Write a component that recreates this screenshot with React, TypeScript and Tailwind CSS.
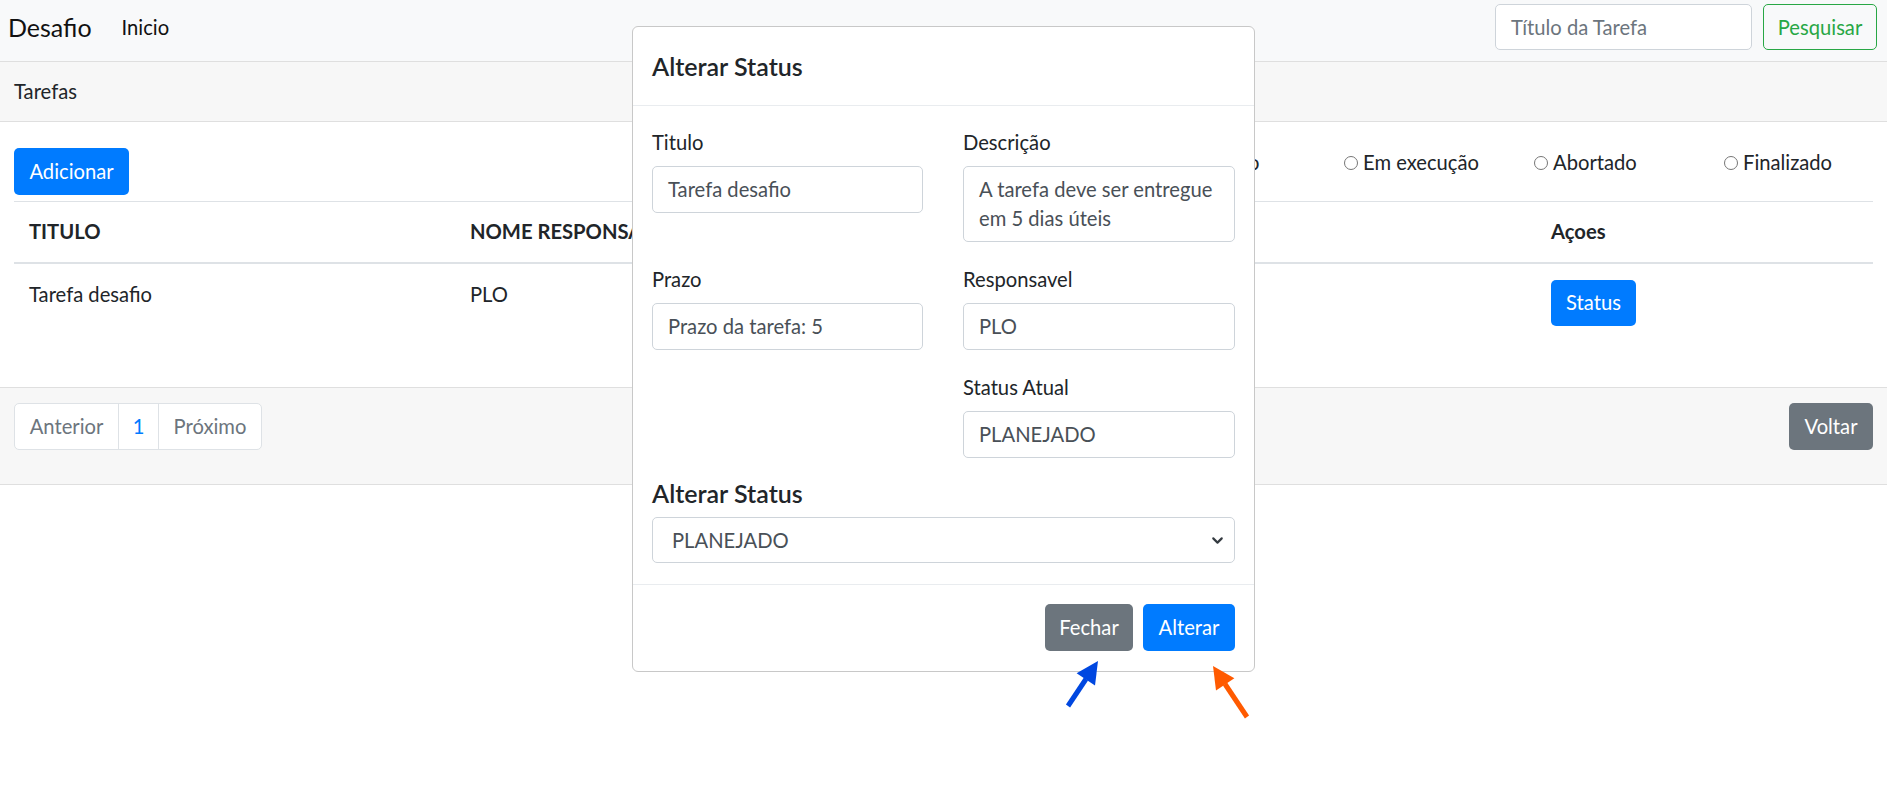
import { ChevronDown } from 'lucide-react'

const font = { fontFamily: 'Lato, "Liberation Sans", sans-serif' }

function Radio({ label, last }: { label: string; last?: boolean }) {
  return (
    <label className={`flex items-center ${last ? '' : 'w-[190px]'}`}>
      <span className="mr-[5px] inline-block h-[14px] w-[14px] rounded-full border border-[#767676] bg-white" />
      <span>{label}</span>
    </label>
  )
}

function Field({ label, value }: { label: string; value: string }) {
  return (
    <div>
      <div className="mb-[9px] leading-[29px]">{label}</div>
      <div className="flex h-[47px] items-center rounded-[5px] border border-[#ced4da] px-[15px] text-[#495057]">
        {value}
      </div>
    </div>
  )
}

function Modal() {
  return (
    <div className="absolute left-[632px] top-[26px] flex h-[646px] w-[623px] flex-col rounded-[6px] border border-[#c8c8c8] bg-white">
      <div className="flex h-[79px] items-center border-b border-[#e9ecef] px-[19px]">
        <h5 className="text-[25px] font-semibold leading-[29px] text-[#212529]">Alterar Status</h5>
      </div>
      <div className="px-[19px] pt-[22px]">
        <div className="grid grid-cols-[271px_272px] gap-x-[40px] gap-y-[23px]">
          <Field label="Titulo" value="Tarefa desafio" />
          <div>
            <div className="mb-[9px] leading-[29px]">Descrição</div>
            <div className="h-[76px] rounded-[5px] border border-[#ced4da] px-[15px] py-[8px] leading-[29px] text-[#495057]">
              A tarefa deve ser entregue
              <br />
              em 5 dias úteis
            </div>
          </div>
          <Field label="Prazo" value="Prazo da tarefa: 5" />
          <Field label="Responsavel" value="PLO" />
          <div />
          <Field label="Status Atual" value="PLANEJADO" />
        </div>
        <div className="mt-[21px]">
          <h5 className="mb-[9px] text-[25px] font-semibold leading-[29px]">Alterar Status</h5>
          <div className="flex h-[46px] items-center justify-between rounded-[5px] border border-[#ced4da] pl-[19px] pr-[8px] text-[#495057]">
            <span>PLANEJADO</span>
            <ChevronDown size={17} strokeWidth={3} className="text-[#343a40]" />
          </div>
        </div>
      </div>
      <div className="mt-[21px] flex flex-1 items-start justify-end gap-[10px] border-t border-[#e9ecef] px-[19px] pt-[19px]">
        <button className="h-[47px] w-[88px] rounded-[5px] bg-[#6c757d] text-white">Fechar</button>
        <button className="h-[47px] w-[92px] rounded-[5px] bg-[#007bff] text-white">Alterar</button>
      </div>
    </div>
  )
}

export default function App() {
  return (
    <div className="relative h-[805px] overflow-hidden bg-white text-[20.2px] leading-[29px] text-[#212529]" style={font}>
      <nav className="flex h-[61px] items-start bg-[#f8f9fa] pl-[8px] pr-[10px] pt-[4px]">
        <div className="flex h-[46px] items-center">
          <span className="text-[25px] text-[#111]">Desafio</span>
          <span className="ml-[30px] text-[#111]">Inicio</span>
        </div>
        <div className="ml-auto flex items-center gap-[11px]">
          <div className="flex h-[46px] w-[257px] items-center rounded-[5px] border border-[#ced4da] bg-white px-[15px] text-[#6c757d]">
            Título da Tarefa
          </div>
          <button className="h-[46px] w-[114px] rounded-[5px] border border-[#28a745] text-[#28a745]">Pesquisar</button>
        </div>
      </nav>

      <div className="border-t border-[#dfdfdf]">
        <div className="flex h-[60px] items-center border-b border-[#dfdfdf] bg-[#f7f7f7] px-[14px]">Tarefas</div>

        <div className="px-[14px] pt-[26px]">
          <div className="flex items-start">
            <button className="h-[47px] w-[115px] rounded-[5px] bg-[#007bff] text-white">Adicionar</button>
            <div className="ml-[1025px] flex">
              <Radio label="Planejado" />
              <Radio label="Em execução" />
              <Radio label="Abortado" />
              <Radio label="Finalizado" last />
            </div>
          </div>

          <table className="mt-[6px] w-full border-collapse text-left">
            <thead>
              <tr className="h-[61px] border-t border-b-2 border-[#dee2e6]">
                <th className="w-[442px] px-[15px] font-bold">TITULO</th>
                <th className="px-[14px] font-bold">NOME RESPONSAVEL</th>
                <th className="w-[336px] px-[14px] font-bold">Açoes</th>
              </tr>
            </thead>
            <tbody>
              <tr>
                <td className="px-[15px] pb-[14px] pt-[16px] align-top">Tarefa desafio</td>
                <td className="px-[14px] pb-[14px] pt-[16px] align-top">PLO</td>
                <td className="px-[14px] pb-[14px] pt-[16px] align-top">
                  <button className="h-[46px] w-[85px] rounded-[5px] bg-[#007bff] text-white">Status</button>
                </td>
              </tr>
            </tbody>
          </table>
          <div className="h-[47px]" />
        </div>

        <div className="flex items-start justify-between border-y border-[#dfdfdf] bg-[#f7f7f7] px-[14px] pb-[34px] pt-[15px]">
          <div className="flex h-[47px] overflow-hidden rounded-[5px] border border-[#dee2e6] bg-white">
            <span className="flex w-[103px] items-center justify-center text-[#6c757d]">Anterior</span>
            <span className="flex w-[41px] items-center justify-center border-x border-[#dee2e6] text-[#007bff]">1</span>
            <span className="flex w-[102px] items-center justify-center text-[#6c757d]">Próximo</span>
          </div>
          <button className="h-[47px] w-[84px] rounded-[5px] bg-[#6c757d] text-white">Voltar</button>
        </div>
      </div>

      <Modal />

      <svg className="absolute left-[1040px] top-[640px]" width="230" height="100" viewBox="0 0 230 100">
        <line x1="28" y1="66" x2="46" y2="39" stroke="#0047e0" strokeWidth="5" />
        <polygon points="58,21 55,45.4 36.6,33.2" fill="#0047e0" />
        <line x1="207" y1="77" x2="185" y2="44" stroke="#ff5a00" strokeWidth="5" />
        <polygon points="173,26 194.4,38.2 176,50.4" fill="#ff5a00" />
      </svg>
    </div>
  )
}
